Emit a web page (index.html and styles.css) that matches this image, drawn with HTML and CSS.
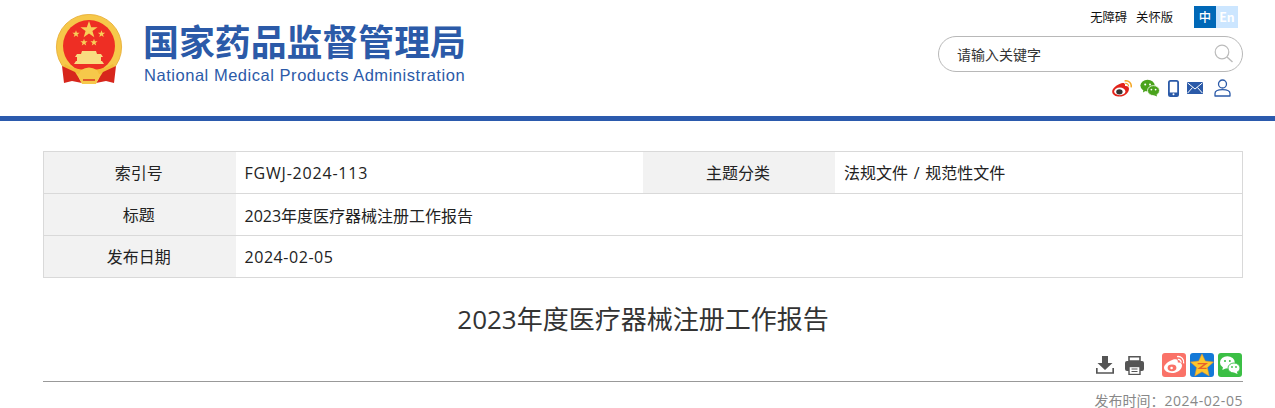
FILE: index.html
```html
<!DOCTYPE html>
<html>
<head>
<meta charset="utf-8">
<meta name="viewport" content="width=device-width, initial-scale=1.0">
<title>2023年度医疗器械注册工作报告</title>
<link rel="stylesheet" href="styles.css">
</head>
<body>
<header class="site-header">
    <div class="header-inner">
        <a class="logo" href="#">
            <svg class="emblem" viewBox="0 0 68 70" xmlns="http://www.w3.org/2000/svg">
                <defs>
                    <polygon id="star" points="0,-1 0.24,-0.31 0.95,-0.31 0.38,0.12 0.59,0.81 0,0.4 -0.59,0.81 -0.38,0.12 -0.95,-0.31 -0.24,-0.31" fill="#f8cf58"/>
                </defs>
                <circle cx="34" cy="33" r="32.6" fill="#f6c84a" stroke="#e6a92e" stroke-width="0.8"/>
                <circle cx="34" cy="32" r="26" fill="#ee2e24"/>
                <use href="#star" transform="translate(34 16) scale(9)"/>
                <use href="#star" transform="translate(21 20) scale(3.8)"/>
                <use href="#star" transform="translate(46.5 20) scale(3.8)"/>
                <use href="#star" transform="translate(29 28.5) scale(3.8)"/>
                <use href="#star" transform="translate(39 28.5) scale(3.8)"/>
                <path d="M27 37 H41 L42 40 H46 L48 43 H46 V47 H47 L49 50 H19 L21 47 H22 V43 H20 L22 40 H26 Z" fill="#f9dc80"/>
                <path d="M10 50 Q20 56 34 56 Q48 56 58 50 L60 54 Q50 61 34 61 Q18 61 8 54 Z" fill="#f4bd3a"/>
                <path d="M7 52 L20 58 L27 69 L17 67 L9 69 Z" fill="#d7261c"/>
                <path d="M61 52 L48 58 L41 69 L51 67 L59 69 Z" fill="#d7261c"/>
                <path d="M26 56 Q34 51 42 56 L45 62 L41 70 H27 L23 62 Z" fill="#f6c84a"/>
                <path d="M28 66 H40" stroke="#d7261c" stroke-width="1.4"/>
            </svg>
            <div class="logo-text">
                <div class="logo-cn">国家药品监督管理局</div>
                <div class="logo-en">National Medical Products Administration</div>
            </div>
        </a>
        <div class="header-tools">
            <div class="top-links">
                <a href="#">无障碍</a>
                <a href="#">关怀版</a>
                <div class="lang">
                    <span class="lang-cn">中</span>
                    <span class="lang-en">En</span>
                </div>
            </div>
            <div class="search-box">
                <span class="search-text">请输入关键字</span>
                <svg class="search-icon" viewBox="0 0 20 20" xmlns="http://www.w3.org/2000/svg">
                    <circle cx="8" cy="8" r="6.8" fill="none" stroke="#bbb" stroke-width="1.2"/>
                    <path d="M13 13 L18.5 18" stroke="#bbb" stroke-width="1.4" fill="none"/>
                </svg>
            </div>
            <div class="social-links">
                <svg class="icon-weibo" viewBox="0 0 20 17" xmlns="http://www.w3.org/2000/svg">
                    <path d="M7.5 4 C10.5 2.4 12.6 3 13 4.4 C13.2 5.2 13 6 13 6 C15.4 5.6 17 6.8 17 8.8 C17 13 12.4 16.6 7.6 16.6 C3.6 16.6 0.2 14.6 0.2 11.4 C0.2 9 3.4 5.8 7.5 4 Z" fill="#e2231a"/>
                    <ellipse cx="7.8" cy="11.4" rx="5.6" ry="3.8" fill="#fff"/>
                    <ellipse cx="7.4" cy="11.8" rx="3.2" ry="2.6" fill="#333"/>
                    <path d="M12.6 0.9 C16.6 0.2 20 3.2 19.1 7.4" stroke="#f5a623" stroke-width="1.5" fill="none"/>
                    <path d="M13.2 3.4 C15.2 3.2 16.7 4.6 16.5 6.4" stroke="#f5a623" stroke-width="1.2" fill="none"/>
                </svg>
                <svg class="icon-wechat" viewBox="0 0 20 18" xmlns="http://www.w3.org/2000/svg">
                    <ellipse cx="7.6" cy="6.6" rx="7.2" ry="5.8" fill="#4aa31c"/>
                    <path d="M3.5 10 L3 13.5 L7 11 Z" fill="#4aa31c"/>
                    <ellipse cx="13.5" cy="11.6" rx="6" ry="5" fill="#4aa31c" stroke="#fff" stroke-width="0.8"/>
                    <path d="M16.5 15 L17 17.6 L13.5 16 Z" fill="#4aa31c"/>
                    <circle cx="5.2" cy="5.4" r="1" fill="#fff"/>
                    <circle cx="10" cy="5.4" r="1" fill="#fff"/>
                    <circle cx="11.4" cy="10.6" r="0.9" fill="#fff"/>
                    <circle cx="15.6" cy="10.6" r="0.9" fill="#fff"/>
                </svg>
                <svg class="icon-phone" viewBox="0 0 11 17" xmlns="http://www.w3.org/2000/svg">
                    <rect x="0.9" y="0.9" width="9.2" height="15.2" rx="1.6" fill="none" stroke="#2b5aa8" stroke-width="1.8"/>
                    <rect x="1" y="12.5" width="9" height="3.6" fill="#2b5aa8"/>
                    <circle cx="5.5" cy="14.3" r="1" fill="#fff"/>
                </svg>
                <svg class="icon-mail" viewBox="0 0 16 12" xmlns="http://www.w3.org/2000/svg">
                    <rect width="16" height="12" fill="#2b5aa8"/>
                    <path d="M0.5 0.8 L8 7 L15.5 0.8 M0.5 11.2 L5.5 5.5 M15.5 11.2 L10.5 5.5" stroke="#fff" stroke-width="1" fill="none"/>
                </svg>
                <svg class="icon-user" viewBox="0 0 17 18" xmlns="http://www.w3.org/2000/svg">
                    <circle cx="8.5" cy="5" r="4" fill="none" stroke="#2b5aa8" stroke-width="1.3"/>
                    <path d="M1 17 V14.5 C1 12 3.5 10.6 8.5 10.6 C13.5 10.6 16 12 16 14.5 V17 Z" fill="none" stroke="#2b5aa8" stroke-width="1.3" stroke-linejoin="round"/>
                </svg>
            </div>
        </div>
    </div>
</header>

<main class="content">
    <table class="info-table">
        <tr>
            <th>索引号</th>
            <td class="col-value"><span class="latin code">FGWJ-2024-113</span></td>
            <th>主题分类</th>
            <td class="col-value type">法规文件 / 规范性文件</td>
        </tr>
        <tr>
            <th>标题</th>
            <td colspan="3">2023年度医疗器械注册工作报告</td>
        </tr>
        <tr>
            <th>发布日期</th>
            <td colspan="3"><span class="latin">2024-02-05</span></td>
        </tr>
    </table>

    <h1 class="article-title">2023年度医疗器械注册工作报告</h1>

    <div class="article-tools">
        <svg class="tool-download" viewBox="0 0 18 18" xmlns="http://www.w3.org/2000/svg">
            <path d="M6 0 H12 V7 H16.5 L9 14 L1.5 7 H6 Z" fill="#555"/>
            <path d="M0.8 12 V17 H17.2 V12" fill="none" stroke="#555" stroke-width="1.7"/>
        </svg>
        <svg class="tool-print" viewBox="0 0 19 19" xmlns="http://www.w3.org/2000/svg">
            <path d="M4 0.8 H15 V5 H4 Z" fill="none" stroke="#555" stroke-width="1.6"/>
            <rect y="5" width="19" height="10" rx="2" fill="#555"/>
            <rect x="4" y="10.5" width="11" height="8" fill="#fff" stroke="#555" stroke-width="1.4"/>
            <path d="M6.5 13 H12.5 M6.5 15.5 H12.5" stroke="#555" stroke-width="1"/>
        </svg>
        <div class="share-links">
            <span class="share share-weibo">
                <svg viewBox="0 0 24 24" xmlns="http://www.w3.org/2000/svg">
                    <path d="M9 7.5 C12.5 5.6 15 6 15.6 7.6 C16 8.6 15.8 9.6 15.8 9.6 C18.2 9.2 20 10.2 20 12.4 C20 16.6 15 20 10 20 C5.6 20 2 17.8 2 14.6 C2 12.4 4.8 9.4 9 7.5 Z" fill="#fff"/>
                    <ellipse cx="10" cy="14.8" rx="4.4" ry="3.4" fill="#fa7268"/>
                    <circle cx="9.6" cy="15" r="1.3" fill="#fff"/>
                    <path d="M15 3.6 C19 3 22.4 6 21.6 10.4 M15.8 6.4 C17.8 6.2 19.4 7.6 19 9.6" stroke="#fff" stroke-width="1.4" fill="none"/>
                </svg>
            </span>
            <span class="share share-qzone">
                <svg viewBox="0 0 24 24" xmlns="http://www.w3.org/2000/svg">
                    <path d="M12 0.8 L15.3 8 L23.6 9 L17.4 14.6 L19.2 23 L12 18.8 L4.8 23 L6.6 14.6 L0.4 9 L8.7 8 Z" fill="#fcc62d" stroke="#e8912a" stroke-width="0.5"/>
                    <path d="M7.6 10.6 H16 L9.4 15.4 H16.6" stroke="#e8602a" stroke-width="1.4" fill="none"/>
                </svg>
            </span>
            <span class="share share-wechat">
                <svg viewBox="0 0 24 24" xmlns="http://www.w3.org/2000/svg">
                    <ellipse cx="9.4" cy="9.4" rx="7.4" ry="6.2" fill="#fff"/>
                    <path d="M5 13.5 L4.4 17 L8.6 15 Z" fill="#fff"/>
                    <ellipse cx="16" cy="15" rx="6" ry="5" fill="#fff" stroke="#3bbf45" stroke-width="0.9"/>
                    <path d="M18.8 18.6 L19.6 21 L15.8 19.6 Z" fill="#fff"/>
                    <circle cx="7" cy="8" r="1" fill="#3bbf45"/>
                    <circle cx="11.8" cy="8" r="1" fill="#3bbf45"/>
                    <circle cx="14" cy="14" r="0.9" fill="#3bbf45"/>
                    <circle cx="18" cy="14" r="0.9" fill="#3bbf45"/>
                </svg>
            </span>
        </div>
    </div>
    <div class="publish-time">发布时间：<span class="latin">2024-02-05</span></div>
</main>
</body>
</html>
```

FILE: styles.css
```css
* {
    box-sizing: border-box;
}
body {
    margin: 0;
    padding: 0;
    font-family: "Open Sans", "Noto Sans CJK SC", sans-serif;
    background: #fff;
    color: #333;
    overflow: hidden;
}
a {
    color: inherit;
    text-decoration: none;
}
.latin {
    letter-spacing: 0.55px;
}
.site-header {
    height: 121px;
    border-bottom: 5px solid #2b5aad;
}
.header-inner {
    width: 1200px;
    margin-left: 43px;
    display: flex;
    justify-content: space-between;
}
.logo {
    display: flex;
    padding: 14px 0 0 12px;
}
.emblem {
    width: 68px;
    height: 70px;
}
.logo-text {
    margin-left: 20px;
    padding-top: 4px;
}
.logo-cn {
    font-family: "Noto Sans CJK SC", sans-serif;
    font-size: 35.9px;
    line-height: 44px;
    font-weight: 700;
    color: #2b5aa8;
    white-space: nowrap;
}
.logo-en {
    font-family: "Liberation Sans", sans-serif;
    font-size: 16.5px;
    line-height: 20px;
    letter-spacing: 0.53px;
    margin-left: 1px;
    margin-top: 3px;
    color: #2b5aa8;
    white-space: nowrap;
}
.header-tools {
    width: 305px;
    display: flex;
    flex-direction: column;
    padding-top: 6px;
}
.top-links {
    display: flex;
    justify-content: flex-end;
    align-items: center;
    height: 22px;
    padding-right: 5px;
    font-family: "Noto Sans CJK SC", sans-serif;
    font-size: 12.3px;
    color: #111;
}
.top-links a {
    margin-right: 9px;
}
.lang {
    display: flex;
    margin-left: 12px;
    color: #fff;
    text-align: center;
    line-height: 22px;
}
.lang-cn {
    width: 22px;
    background: #0068b7;
    font-weight: 500;
}
.lang-en {
    width: 22px;
    background: #cce6ff;
    font-weight: 700;
}
.search-box {
    height: 36px;
    margin-top: 8px;
    border: 1px solid #b8b8b8;
    border-radius: 18px;
    display: flex;
    align-items: center;
    justify-content: space-between;
    padding: 0 8px 0 18px;
}
.search-text {
    font-family: "Noto Sans CJK SC", sans-serif;
    font-size: 14px;
    color: #333;
}
.search-icon {
    width: 20px;
    height: 20px;
}
.social-links {
    display: flex;
    justify-content: flex-end;
    align-items: center;
    height: 18px;
    margin-top: 7px;
    padding-right: 12px;
}
.icon-weibo {
    width: 20px;
    height: 17px;
    margin-right: 8px;
}
.icon-wechat {
    width: 20px;
    height: 18px;
    margin-right: 8px;
}
.icon-phone {
    width: 11px;
    height: 17px;
    margin-right: 8px;
}
.icon-mail {
    width: 16px;
    height: 12px;
    margin-right: 11px;
}
.icon-user {
    width: 17px;
    height: 18px;
}
.content {
    width: 1200px;
    margin-left: 43px;
}
.info-table {
    width: 1200px;
    margin-top: 30px;
    border-collapse: collapse;
    table-layout: fixed;
    font-size: 16px;
    color: #222;
}
.info-table th,
.info-table td {
    height: 42px;
    padding: 0;
    border-top: 1px solid #d9d9d9;
    border-bottom: 1px solid #d9d9d9;
}
.info-table tr > :first-child {
    border-left: 1px solid #d9d9d9;
}
.info-table tr > :last-child {
    border-right: 1px solid #d9d9d9;
}
.info-table th {
    width: 192px;
    padding-right: 2px;
    padding-bottom: 2px;
    background: #f2f2f2;
    font-weight: 400;
    text-align: center;
}
.info-table td {
    padding-left: 9px;
}
.info-table .code {
    letter-spacing: 0.8px;
}
.info-table .type {
    word-spacing: 1.5px;
    padding-bottom: 2px;
}
.article-title {
    margin: 23px 0 0;
    height: 36px;
    line-height: 36px;
    text-align: center;
    font-size: 26px;
    font-weight: 400;
    color: #333;
}
.article-tools {
    display: flex;
    justify-content: flex-end;
    align-items: center;
    height: 29px;
    margin-top: 16px;
    padding: 0 1px 4px 0;
    border-bottom: 1px solid #999;
}
.tool-download {
    width: 18px;
    height: 18px;
    margin-right: 11px;
}
.tool-print {
    width: 19px;
    height: 19px;
    margin-right: 18px;
}
.share-links {
    display: flex;
    gap: 4px;
}
.share {
    display: block;
    width: 24px;
    height: 24px;
    border-radius: 3px;
}
.share svg {
    display: block;
    width: 24px;
    height: 24px;
}
.share-weibo {
    background: #fa7268;
}
.share-qzone {
    background: #1479d7;
}
.share-wechat {
    background: #3bbf45;
}
.publish-time {
    margin-top: 9px;
    text-align: right;
    font-size: 14px;
    line-height: 20px;
    color: #888;
}
```
